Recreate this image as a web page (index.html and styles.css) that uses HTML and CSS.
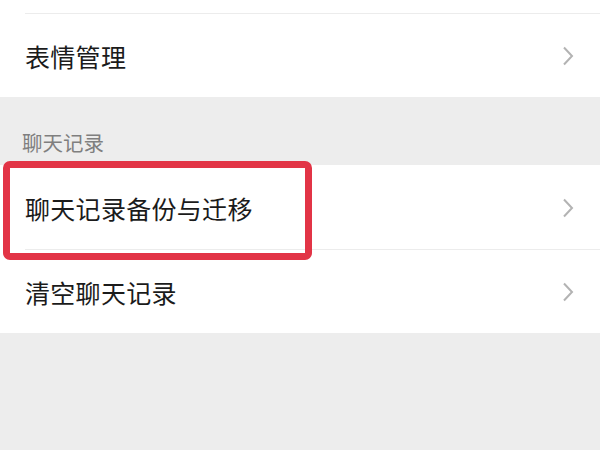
FILE: index.html
```html
<!DOCTYPE html>
<html lang="zh-CN">
<head>
<meta charset="utf-8">
<link rel="stylesheet" href="styles.css">
</head>
<body>
<div class="page">
  <div class="group group-top">
    <div class="prev-row"></div>
    <div class="row">
      <span class="label">表情管理</span>
      <svg class="chev" viewBox="0 0 12 20" width="12" height="20"><path d="M2 1.5 L10 10 L2 18.5" fill="none" stroke="#b3b3b3" stroke-width="2"/></svg>
    </div>
  </div>
  <div class="section-title">聊天记录</div>
  <div class="group">
    <div class="row row-first">
      <span class="label">聊天记录备份与迁移</span>
      <svg class="chev" viewBox="0 0 12 20" width="12" height="20"><path d="M2 1.5 L10 10 L2 18.5" fill="none" stroke="#b3b3b3" stroke-width="2"/></svg>
      <div class="highlight"></div>
    </div>
    <div class="row row-last">
      <span class="label">清空聊天记录</span>
      <svg class="chev" viewBox="0 0 12 20" width="12" height="20"><path d="M2 1.5 L10 10 L2 18.5" fill="none" stroke="#b3b3b3" stroke-width="2"/></svg>
    </div>
  </div>
</div>
</body>
</html>
```
FILE: styles.css
```css
html, body {
  margin: 0;
  padding: 0;
  background: #ededed;
  font-family: "Noto Sans CJK SC", "Noto Sans", sans-serif;
}
.page {
  width: 600px;
  height: 450px;
  overflow: hidden;
}
.group {
  background: #ffffff;
}
.prev-row {
  height: 14px;
  margin-left: 25px;
  border-bottom: 1px solid #ececec;
  box-sizing: border-box;
}
.row {
  position: relative;
  display: flex;
  align-items: center;
  justify-content: space-between;
  padding: 0 26px 0 25px;
  height: 83px;
  box-sizing: border-box;
}
.row-first {
  height: 85px;
}
.row-first::after {
  content: "";
  position: absolute;
  left: 25px;
  right: 0;
  bottom: 0;
  border-bottom: 1px solid #ececec;
}
.label {
  font-size: 25px;
  color: #1b1b1b;
  letter-spacing: 0.3px;
}
.chev {
  display: block;
}
.section-title {
  height: 68px;
  box-sizing: border-box;
  padding: 32px 0 0 22px;
  font-size: 20.5px;
  line-height: 26px;
  color: #7f7f7f;
}
.highlight {
  position: absolute;
  left: 3px;
  top: -4px;
  width: 309px;
  height: 99px;
  box-sizing: border-box;
  border: 7px solid #e23446;
  border-radius: 7px;
  z-index: 2;
}
```
